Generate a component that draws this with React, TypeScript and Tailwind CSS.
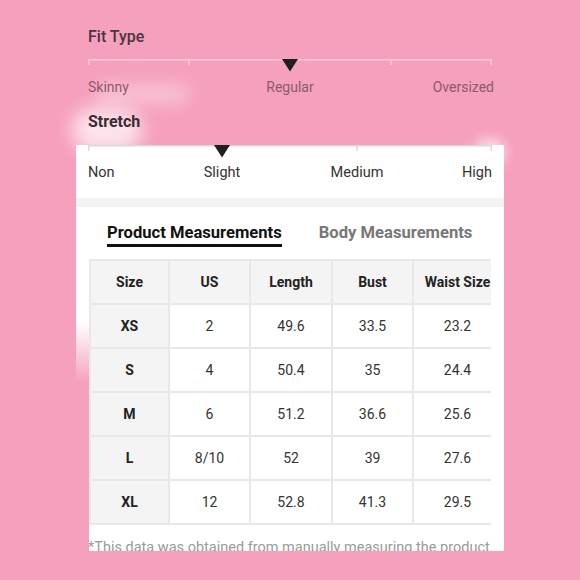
import React from "react";

const rows = [
  { size: "XS", us: "2", length: "49.6", bust: "33.5", waist: "23.2" },
  { size: "S", us: "4", length: "50.4", bust: "35", waist: "24.4" },
  { size: "M", us: "6", length: "51.2", bust: "36.6", waist: "25.6" },
  { size: "L", us: "8/10", length: "52", bust: "39", waist: "27.6" },
  { size: "XL", us: "12", length: "52.8", bust: "41.3", waist: "29.5" },
];

// slider scale: line with ticks and a pointer
function Scale({ ticks, pointer, line }: { ticks: number[]; pointer: number; line: string }) {
  return (
    <svg width="404" height="14" viewBox="0 0 404 14" className="block">
      <line x1="0" y1="0.75" x2="404" y2="0.75" stroke={line} strokeWidth="1.5" />
      {ticks.map((t) => (
        <line key={t} x1={t} y1="0" x2={t} y2="6" stroke={line} strokeWidth="1.5" />
      ))}
      <polygon points={`${pointer - 8},0 ${pointer + 8},0 ${pointer},12.5`} fill="#1f1f1f" />
    </svg>
  );
}

export default function App() {
  return (
    <div className="relative w-[580px] h-[580px] overflow-hidden bg-[#f5a0bc] font-['Roboto','Liberation_Sans',sans-serif]">
      {/* haze from the original picture, behind the text */}
      <div className="absolute left-[72px] top-[108px] w-[70px] h-[44px] rounded-full bg-white/70 blur-[9px]" />
      <div className="absolute left-[95px] top-[84px] w-[95px] h-[20px] rounded-full bg-white/35 blur-[8px]" />
      <div className="absolute left-[474px] top-[138px] w-[32px] h-[30px] rounded-full bg-white/60 blur-[6px]" />

      {/* pink part on top */}
      <div className="relative pl-[88px] pt-[27px]">
        <div className="text-[16px] leading-[20px] font-medium text-[#4a3540]">Fit Type</div>
        <div className="mt-[12px]">
          <Scale ticks={[0.75, 101, 303, 403.25]} pointer={202} line="#f8cbd9" />
        </div>
        <div className="relative mt-[5px] w-[404px] h-[18px] text-[14px] leading-[18px] text-[#8e5a6c]">
          <span className="absolute left-0">Skinny</span>
          <span className="absolute left-[202px] -translate-x-1/2">Regular</span>
          <span className="absolute right-[-2px]">Oversized</span>
        </div>
        <div className="mt-[16px] text-[16px] leading-[20px] font-bold text-[#3b2c33]">Stretch</div>
      </div>

      {/* white panel */}
      <div className="relative mt-[13px] ml-[76px] w-[428px] h-[406px] bg-white overflow-hidden">
        <div className="pl-[12px]">
          <Scale ticks={[0.75, 269, 403.25]} pointer={134} line="#d9d9d9" />
          <div className="relative mt-[4px] w-[404px] h-[20px] text-[14.5px] leading-[20px] text-[#333]">
            <span className="absolute left-0">Non</span>
            <span className="absolute left-[134px] -translate-x-1/2">Slight</span>
            <span className="absolute left-[269px] -translate-x-1/2">Medium</span>
            <span className="absolute right-0">High</span>
          </div>
        </div>
        <div className="mt-[15px] h-[9px] bg-[#f3f3f3]" />

        <div className="pt-[16px] pl-[31px] flex items-start gap-[37px]">
          <div className="flex flex-col">
            <span className="text-[16.6px] leading-[20px] font-bold text-[#111]">Product Measurements</span>
            <span className="mt-[1px] h-[3px] bg-[#111]" />
          </div>
          <span className="text-[16.6px] leading-[20px] font-bold text-[#777]">Body Measurements</span>
        </div>

        <div className="mt-[12px] ml-[13px] w-[402px] overflow-hidden">
          <table className="border-collapse text-[14px] text-[#333] text-center w-[412px] table-fixed">
            <colgroup>
              <col className="w-[79px]" />
              <col className="w-[81px]" />
              <col className="w-[82px]" />
              <col className="w-[81px]" />
              <col className="w-[89px]" />
            </colgroup>
            <thead>
              <tr className="bg-[#f4f4f4] h-[44px] text-[#222]">
                {["Size", "US", "Length", "Bust", "Waist Size"].map((h) => (
                  <th key={h} className="border-2 border-[#e8e8e8] font-bold">{h}</th>
                ))}
              </tr>
            </thead>
            <tbody>
              {rows.map((r) => (
                <tr key={r.size} className="h-[44px]">
                  <td className="border-2 border-[#e8e8e8] bg-[#f4f4f4] font-bold text-[#222]">{r.size}</td>
                  <td className="border-2 border-[#e8e8e8]">{r.us}</td>
                  <td className="border-2 border-[#e8e8e8]">{r.length}</td>
                  <td className="border-2 border-[#e8e8e8]">{r.bust}</td>
                  <td className="border-2 border-[#e8e8e8]">{r.waist}</td>
                </tr>
              ))}
            </tbody>
          </table>
        </div>

        <div className="mt-[14px] pl-[12px] text-[14.5px] leading-[18px] text-[#9a9a9a] whitespace-nowrap">
          *This data was obtained from manually measuring the product.
        </div>
      </div>

      {/* the picture was cropped along the left edge below the header row */}
      <div className="absolute left-[74px] top-[322px] w-[15px] h-[240px] bg-linear-to-b from-[#f5a0bc]/0 via-[#f5a0bc] via-[25%] to-[#f5a0bc]" />
    </div>
  );
}
